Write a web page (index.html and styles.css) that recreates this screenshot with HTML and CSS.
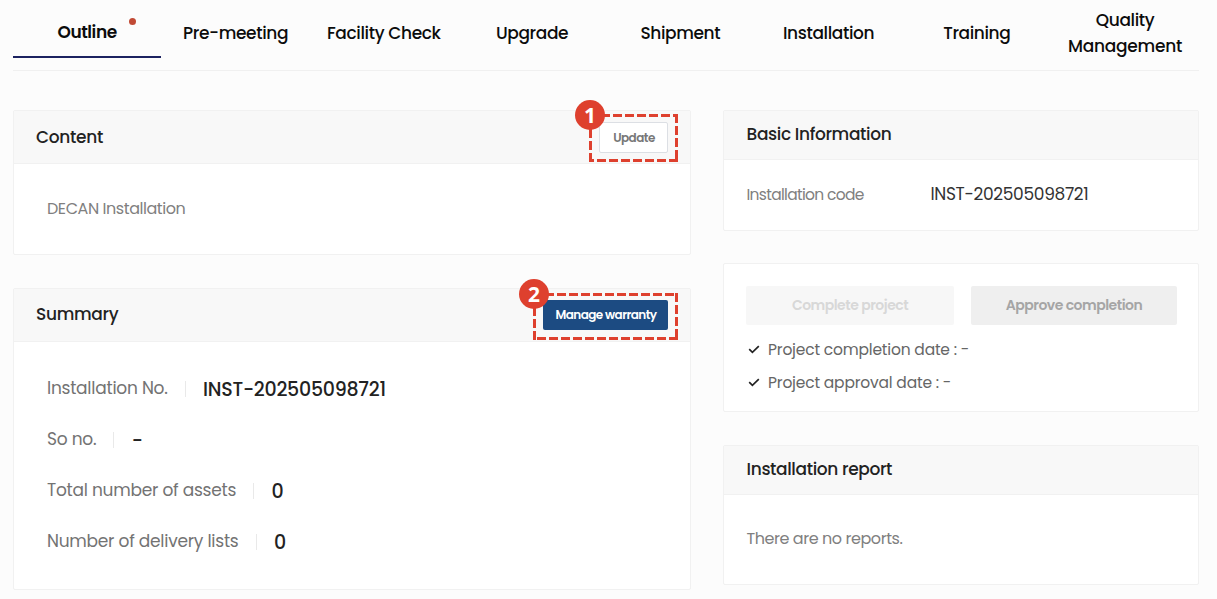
FILE: index.html
```
<!DOCTYPE html>
<html lang="en">
<head>
<meta charset="utf-8">
<title>Project outline</title>
<link rel="stylesheet" href="styles.css">
</head>
<body>
<nav class="tabs">
  <a class="tab tab-active"><span>Outline</span><i class="tab-dot"></i></a>
  <a class="tab"><span>Pre-meeting</span></a>
  <a class="tab"><span>Facility Check</span></a>
  <a class="tab"><span>Upgrade</span></a>
  <a class="tab"><span>Shipment</span></a>
  <a class="tab"><span>Installation</span></a>
  <a class="tab"><span>Training</span></a>
  <a class="tab"><span>Quality</span><span class="tab-management">Management</span></a>
</nav>
<main class="columns">
  <div class="column column-main">
    <section class="card card-content">
      <header class="card-head"><h2>Content</h2>
        <div class="callout callout-update"><button class="btn btn-update">Update</button>
          <svg class="callout-frame" width="89" height="48"><path d="M0 1.5H89M87.5 0V48M89 46.5H0M1.5 48V0"/></svg><b class="marker">1</b></div>
      </header>
      <div class="card-body content-body"><p>DECAN Installation</p></div>
    </section>
    <section class="card card-summary">
      <header class="card-head"><h2>Summary</h2>
        <div class="callout callout-warranty"><button class="btn btn-warranty">Manage warranty</button>
          <svg class="callout-frame" width="145" height="47"><path d="M0 1.5H145M143.5 0V47M145 45.5H0M1.5 47V0"/></svg><b class="marker">2</b></div>
      </header>
      <dl class="summary">
        <div class="row"><dt>Installation No.</dt><dd>INST-202505098721</dd></div>
        <div class="row"><dt>So no.</dt><dd>-</dd></div>
        <div class="row"><dt>Total number of assets</dt><dd>0</dd></div>
        <div class="row"><dt>Number of delivery lists</dt><dd>0</dd></div>
      </dl>
    </section>
  </div>
  <div class="column column-side">
    <section class="card card-basic">
      <header class="card-head"><h2>Basic Information</h2></header>
      <div class="card-body basic-body"><span class="info-label">Installation code</span><span class="info-code">INST-202505098721</span></div>
    </section>
    <section class="card card-actions">
      <div class="actions"><button class="btn btn-complete">Complete project</button><button class="btn btn-approve">Approve completion</button></div>
      <ul class="dates">
        <li><svg class="check" viewBox="0 0 12 9"><path d="M1.2 4.2 4.4 7.3 10.8 1.2"/></svg><span>Project completion date : -</span></li>
        <li><svg class="check" viewBox="0 0 12 9"><path d="M1.2 4.2 4.4 7.3 10.8 1.2"/></svg><span>Project approval date : -</span></li>
      </ul>
    </section>
    <section class="card card-report">
      <header class="card-head"><h2>Installation report</h2></header>
      <div class="card-body report-body"><p>There are no reports.</p></div>
    </section>
  </div>
</main>
</body>
</html>
```
FILE: styles.css
```
* { box-sizing: border-box; }
body {
  margin: 0;
  height: 599px;
  overflow: hidden;
  background: #fcfcfc;
  font-family: Poppins, Inter, "Open Sans", sans-serif;
  color: #222;
}
h2, p, dl, dd, ul { margin: 0; padding: 0; }

.tabs {
  display: grid;
  grid-template-columns: repeat(8, 1fr);
  margin: 0 18px 0 13px;
  height: 71px;
  border-bottom: 1px solid #f0f0f0;
}
.tab {
  position: relative;
  display: flex;
  flex-direction: column;
  align-items: center;
  justify-content: center;
  padding: 0 0 5px 0.4px;
  font-size: 17px;
  line-height: 26px;
  font-weight: 500;
  letter-spacing: -0.37px;
  color: #0c0c0c;
  white-space: nowrap;
}
.tab-active {
  height: 58px;
  padding: 7px 0 0;
  border-bottom: 2px solid #1c2260;
  font-weight: 600;
  letter-spacing: -0.45px;
}
.tab-management { letter-spacing: -0.27px; }
.tab-dot {
  position: absolute;
  left: 115.5px;
  top: 18px;
  width: 7px;
  height: 7px;
  border-radius: 50%;
  background: #c14a35;
}

.columns {
  display: grid;
  grid-template-columns: 678px 476px;
  gap: 32px;
  margin: 39px 0 0 13px;
}
.column { display: flex; flex-direction: column; gap: 33px; }
.column-side { gap: 32px; }
.card {
  background: #fff;
  border: 1px solid #f1f1f1;
  border-radius: 2px;
}
.card-content { height: 145px; }
.card-summary { height: 302px; }
.card-basic { height: 121px; }
.card-actions { height: 149px; margin-bottom: 1px; padding: 22px 21px 0 22px; }
.card-report { height: 140px; }

.card-head {
  display: flex;
  justify-content: space-between;
  height: 53px;
  padding: 0 12px 0 22px;
  background: #f8f8f8;
  border-bottom: 1px solid #f1f1f1;
}
.card-head h2 {
  font-size: 17px;
  line-height: 52px;
  font-weight: 500;
  letter-spacing: -0.33px;
  white-space: nowrap;
}
.card-summary .card-head h2 { line-height: 51px; }
.column-side .card-head { height: 49px; padding-left: 22.6px; }
.column-side .card-head h2 { line-height: 47px; letter-spacing: -0.36px; }
.card-body { display: flex; color: #808080; font-size: 16px; letter-spacing: -0.44px; white-space: nowrap; }
.content-body { padding: 32px 33px; line-height: 26px; }
.basic-body { padding: 21px 22.5px; line-height: 28px; }
.report-body { padding: 31px 22.5px; line-height: 26px; }
.info-label { width: 184px; font-size: 15.5px; letter-spacing: -0.69px; }
.info-code { font-size: 17px; line-height: 27px; letter-spacing: -0.33px; color: #333; }

.btn {
  padding: 0;
  border: 0;
  border-radius: 2px;
  font-family: inherit;
  white-space: nowrap;
}
.callout { position: relative; }
.callout-update { width: 89px; height: 48px; margin: 3px 0 0; padding: 8px 10px; }
.callout-warranty { width: 145px; height: 47px; margin: 4px 0 0; padding: 7px 10px; }
.callout-frame { position: absolute; left: 0; top: 0; fill: none; stroke: #de402e; stroke-width: 3; stroke-dasharray: 9 3; }
.marker {
  position: absolute;
  left: -14px;
  top: -14px;
  width: 30px;
  height: 30px;
  border-radius: 50%;
  background: #de402e;
  color: #fff;
  font: 700 21px/30px "Noto Sans", sans-serif;
  text-align: center;
}
.btn-update {
  display: block;
  width: 69px;
  height: 31px;
  padding-left: 1px;
  background: #fff;
  border: 1px solid #dcdfe4;
  color: #777;
  font-size: 12px;
  font-weight: 600;
  letter-spacing: -0.55px;
}
.btn-warranty {
  display: block;
  width: 125px;
  height: 30px;
  background: #1c4b82;
  color: #fff;
  font-size: 12px;
  line-height: 28px;
  padding: 0 0 1px 1px;
  font-weight: 600;
  letter-spacing: -0.55px;
}

.summary { padding: 21px 33px; }
.row { display: flex; align-items: center; height: 51px; white-space: nowrap; }
.row dt { font-size: 17px; letter-spacing: -0.25px; color: #737373; line-height: 28px; margin-top: -1px; }
.row dd {
  display: flex;
  align-items: center;
  font-size: 19px;
  line-height: 28px;
  font-weight: 500;
  letter-spacing: -0.26px;
  margin-top: 2px;
}
.row dd::before {
  content: "";
  width: 1px;
  height: 16px;
  margin: -1px 17.5px 0 17px;
  background: #e9e9e9;
}

.actions { display: grid; grid-template-columns: 208px 206px; gap: 17px; height: 39px; }
.btn-complete { background: #f7f7f7; color: #d8d8d8; font-size: 14px; font-weight: 600; letter-spacing: -0.5px; }
.btn-approve { background: #efefef; color: #a5a5a5; font-size: 14px; font-weight: 600; letter-spacing: -0.5px; }
.dates { list-style: none; padding: 8px 2px; }
.dates li { display: flex; align-items: center; height: 33px; font-size: 15.5px; letter-spacing: -0.19px; color: #666; white-space: nowrap; }
.check { width: 12px; height: 9px; margin-right: 8px; fill: none; stroke: #222; stroke-width: 1.7; }
```
